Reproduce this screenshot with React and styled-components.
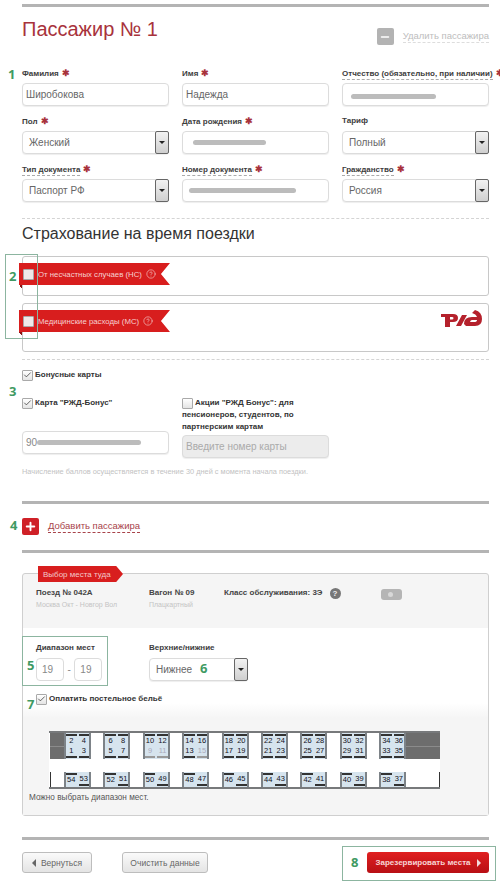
import React from 'react'
import styled, { createGlobalStyle } from 'styled-components'
import { Check, CircleHelp, Minus, Plus } from 'lucide-react'

const GlobalStyle = createGlobalStyle`
  html, body {
    margin: 0;
    padding: 0;
    background: #fff;
    font-family: "Liberation Sans", Arial, sans-serif;
    color: #333;
  }
`

const Page = styled.div`
  position: relative;
  width: 500px;
  height: 887px;
  overflow: hidden;
  padding: 4px 11px 0 22px;
  box-sizing: border-box;
`

const Rule = styled.div`
  height: 3px;
  background: #b4b4b4;
  margin-top: ${p => p.$top || 0}px;
`

const Dashed = styled.div`
  border-top: 1px dashed #d4d4d4;
  margin-top: ${p => p.$top || 0}px;
`

const TitleRow = styled.div`
  display: flex;
  justify-content: space-between;
  align-items: flex-start;
  height: 59px;
`

const Title = styled.h1`
  margin: 10px 0 0;
  font-size: 20px;
  line-height: 24px;
  font-weight: normal;
  color: #a8333c;
`

const RemoveLink = styled.div`
  display: flex;
  align-items: center;
  gap: 9px;
  margin-top: 21px;
  font-size: 9.5px;
  color: #bdbdbd;
`

const SquareIcon = styled.div`
  width: 17px;
  height: 17px;
  border-radius: 2px;
  background: ${p => p.$bg};
  color: #fff;
  display: flex;
  align-items: center;
  justify-content: center;
`

const DottedText = styled.span`
  border-bottom: 1px dashed ${p => p.$line || '#ddd'};
  padding-bottom: 1px;
`

const FormGrid = styled.div`
  display: grid;
  grid-template-columns: 147px 147px 147px;
  column-gap: 13px;
  row-gap: 8px;
`

const Field = styled.div`
  display: flex;
  flex-direction: column;
`

const Label = styled.div`
  height: 17px;
  font-size: 8px;
  line-height: 14px;
  font-weight: bold;
  color: #3d3d3d;
  white-space: nowrap;
`

const Req = styled.span`
  color: #a8333c;
  font-size: 8.5px;
  margin-left: 3px;
`

const InputBox = styled.div`
  display: flex;
  align-items: center;
  box-sizing: border-box;
  height: 23px;
  padding-left: 3px;
  border: 1px solid #dcdcdc;
  border-radius: 4px;
  background: ${p => p.$bg || '#fff'};
  font-size: 10px;
  color: ${p => p.$color || '#666'};
  box-shadow: 0 1px 1px #eee;
`

const Blur = styled.div`
  width: ${p => p.$w}px;
  height: 5px;
  margin-left: ${p => p.$left || 0}px;
  margin-top: ${p => p.$down || 0}px;
  border-radius: 3px;
  background: #bcbcbc;
`

const SelectBox = styled(InputBox)`
  justify-content: space-between;
  padding-left: 6px;
`

const SelectArrow = styled.div`
  width: 14px;
  height: 23px;
  margin: -1px -1px -1px 0;
  box-sizing: border-box;
  border: 1px solid #666;
  border-radius: 2px;
  background: linear-gradient(#f2f2f2, #cfcfcf);
  display: flex;
  align-items: center;
  justify-content: center;

  &::after {
    content: '';
    border-left: 3px solid transparent;
    border-right: 3px solid transparent;
    border-top: 3px solid #222;
  }
`

const Heading = styled.h2`
  margin: 5px 0 12px;
  font-size: 16px;
  line-height: 20px;
  font-weight: normal;
  color: #333;
`

const InsuranceCard = styled.div`
  position: relative;
  box-sizing: border-box;
  height: ${p => p.$h}px;
  margin-bottom: 7px;
  padding-top: 6px;
  border: 1px solid #c8c8c8;
  border-radius: 3px;
`

const Ribbon = styled.div`
  display: flex;
  align-items: center;
  box-sizing: border-box;
  width: 151px;
  height: 22px;
  margin-left: -4px;
  padding-left: 4px;
  gap: 4px;
  background: #d81e1e;
  clip-path: polygon(0 0, 100% 0, 94% 50%, 100% 100%, 0 100%);
  color: #f6d0d0;
  font-size: 7.8px;
  white-space: nowrap;
`

const RibbonFold = styled.div`
  width: 3px;
  height: 3px;
  margin-left: -4px;
  background: linear-gradient(to top right, transparent 50%, #8c1414 50%);
`

const RzdLogo = styled.svg`
  position: absolute;
  right: 6px;
  top: 6px;
  width: 41px;
  height: 18px;
`

const Box = styled.div`
  flex: none;
  box-sizing: border-box;
  width: 11px;
  height: 11px;
  border: 1px solid #a9a9a9;
  border-radius: 1px;
  background: ${p => p.$light ? '#f0e8e8' : 'linear-gradient(#fff, #e4e4e4)'};
  color: #333;
  display: flex;
  align-items: center;
  justify-content: center;
`

const CheckLine = styled.div`
  display: flex;
  align-items: center;
  gap: 2px;
  margin-top: ${p => p.$top || 0}px;
  font-size: 8px;
  line-height: 12px;
  font-weight: bold;
  color: #333;
`

const BonusGrid = styled.div`
  display: grid;
  grid-template-columns: 147px 147px;
  column-gap: 13px;
  margin-top: 16px;
`

const BonusColumn = styled.div`
  display: flex;
  flex-direction: column;
`

const BonusText = styled.div`
  font-size: 8px;
  line-height: 12px;
  font-weight: bold;
  color: #333;
  margin-bottom: ${p => p.$bottom || 0}px;
`

const BonusSpacer = styled.div`
  height: 22px;
`

const BlurredCard = styled.div`
  display: flex;
  align-items: center;
  color: #888;
`

const Note = styled.div`
  margin-top: 8px;
  font-size: 7.4px;
  line-height: 12px;
  color: #c2c2c2;
`

const AddRow = styled.div`
  display: flex;
  align-items: center;
  gap: 9px;
  margin-top: 13px;
  height: 18px;
  font-size: 9.5px;
  color: #a8434a;
`

const SeatPanel = styled.div`
  margin-top: 20px;
  height: 243px;
  box-sizing: border-box;
  border: 1px solid #cfcfcf;
  border-radius: 3px;
  background: #f5f5f5;
  display: flex;
  flex-direction: column;
`

const PanelRibbon = styled.div`
  display: flex;
  align-items: center;
  box-sizing: border-box;
  width: 85px;
  height: 16px;
  margin: -8px 0 0 15px;
  padding-left: 5px;
  background: #d81e1e;
  clip-path: polygon(0 0, 92% 0, 100% 50%, 92% 100%, 0 100%);
  color: #f3c9c9;
  font-size: 8px;
  white-space: nowrap;
`

const TrainInfo = styled.div`
  display: flex;
  height: 41px;
  padding: 5px 0 0 13px;
  box-sizing: content-box;
`

const InfoCol = styled.div`
  width: ${p => p.$w}px;
`

const InfoTitle = styled.div`
  display: flex;
  align-items: center;
  gap: 7px;
  font-size: 8px;
  line-height: 12px;
  font-weight: bold;
  color: #444;
  white-space: nowrap;
`

const InfoSub = styled.div`
  margin-top: 1px;
  font-size: 7px;
  line-height: 10px;
  color: #c4c4c4;
  white-space: nowrap;
`

const HelpDot = styled.span`
  width: 11px;
  height: 11px;
  border-radius: 50%;
  background: #777;
  color: #eee;
  font-size: 8px;
  line-height: 11px;
  text-align: center;
`

const PhotoBadge = styled.div`
  width: 21px;
  height: 11px;
  margin-top: 2px;
  border-radius: 3px;
  background: #b5b5b5;
  display: flex;
  align-items: center;
  padding-left: 7px;
  box-sizing: border-box;

  &::before {
    content: '';
    width: 5px;
    height: 5px;
    border-radius: 50%;
    background: #d8d8d8;
  }
`

const PanelBody = styled.div`
  flex: 1;
  background: linear-gradient(#fff 0, #fff 75px, #f5f5f5 90px);
  padding: 13px 0 0 13px;
`

const FilterRow = styled.div`
  display: flex;
`

const FilterCol = styled.div`
  width: ${p => p.$w}px;
`

const RangeInputs = styled.div`
  display: flex;
  align-items: center;
  gap: 3.5px;
  font-size: 10px;
  color: #888;
`

const SmallInput = styled(InputBox)`
  width: 28px;
  padding-left: 5px;
  color: #888;
  box-shadow: none;
`

const Train = styled.div`
  box-sizing: border-box;
  width: 391px;
  height: 58px;
  margin: 26px 0 0 13px;
  border-top: 2px solid #77797b;
  border-bottom: 2px solid #77797b;
  background: #fff;
  display: flex;
  flex-direction: column;
  justify-content: space-between;
`

const TrainRow = styled.div`
  display: flex;
  height: ${p => p.$h}px;
  padding-left: 1px;
`

const TrainEnd = styled.div`
  flex: none;
  width: ${p => p.$w}px;
  height: 100%;
  background: ${p => p.$dark ? 'linear-gradient(#6d6d6d 49%, #8b8b8b 49%, #8b8b8b 52%, #6d6d6d 52%)' : 'transparent'};
  border-left: ${p => p.$wall ? '1px solid #333' : '0'};
  border-right: ${p => p.$rightWall ? '1px solid #333' : '0'};
  box-sizing: border-box;
`

const Compartment = styled.div`
  flex: none;
  box-sizing: border-box;
  width: 27px;
  margin-right: ${p => p.$last ? 0 : 12.4}px;
  padding: 1px 0;
  border-left: 2px solid #7d8388;
  border-right: 2px solid #7d8388;
  background: #d6e4ee;
  display: grid;
  grid-template-columns: 1fr 1fr;
  column-gap: 2px;
`

const Seat = styled.div`
  box-sizing: border-box;
  height: ${p => p.$h}px;
  font-size: 7.5px;
  line-height: 10px;
  color: ${p => p.$off ? '#aab' : '#112'};
  display: flex;
  justify-content: center;
  align-items: ${p => p.$up ? 'flex-start' : 'flex-end'};
  border-top: ${p => p.$up ? `2px solid ${p.$off ? '#999' : '#333'}` : '0'};
  border-bottom: ${p => p.$up ? '0' : `2px solid ${p.$off ? '#999' : '#333'}`};
`

const TrainHint = styled.div`
  margin: 3px 0 0 -7px;
  font-size: 8.2px;
  line-height: 11px;
  color: #555;
`

const Actions = styled.div`
  display: flex;
  align-items: center;
  margin-top: 12px;
`

const GrayButton = styled.div`
  box-sizing: border-box;
  height: 21px;
  width: ${p => p.$w}px;
  margin-right: ${p => p.$right || 0}px;
  border: 1px solid #bdbdbd;
  border-radius: 3px;
  background: linear-gradient(#fafafa, #e4e4e4);
  color: #666;
  font-size: 8.5px;
  display: flex;
  align-items: center;
  justify-content: center;
  gap: 5px;
`

const RedButton = styled.div`
  box-sizing: border-box;
  height: 21px;
  width: 122px;
  margin-left: auto;
  border-radius: 3px;
  background: linear-gradient(#e02020, #b80f14);
  color: #f7d5d5;
  font-size: 8px;
  font-weight: bold;
  display: flex;
  align-items: center;
  justify-content: center;
  gap: 6px;
`

const Arrow = styled.span`
  border-top: 4px solid transparent;
  border-bottom: 4px solid transparent;
  ${p => p.$left ? `border-right: 4px solid ${p.$color};` : `border-left: 4px solid ${p.$color};`}
`

// green review notes laid over the form
const Marker = styled.span`
  position: absolute;
  left: ${p => p.$x}px;
  top: ${p => p.$y}px;
  font-family: "Open Sans", sans-serif;
  font-size: 13px;
  line-height: 14px;
  font-weight: bold;
  color: #3f9a63;
`

const Frame = styled.div`
  position: absolute;
  left: ${p => p.$x}px;
  top: ${p => p.$y}px;
  width: ${p => p.$w}px;
  height: ${p => p.$h}px;
  border: 1px solid #8cb5a0;
  box-sizing: border-box;
`

const CheckBox = ({ checked, light }) => (
  <Box $light={light}>{checked && <Check size={10} strokeWidth={2} />}</Box>
)

const compartments = [
  { top: [[2], [4], [1], [3]], bottom: [54, 53] },
  { top: [[6], [8], [5], [7]], bottom: [52, 51] },
  { top: [[10], [12], [9, true], [11, true]], bottom: [50, 49] },
  { top: [[14], [16], [13], [15, true]], bottom: [48, 47] },
  { top: [[18], [20], [17], [19]], bottom: [46, 45] },
  { top: [[22], [24], [21], [23]], bottom: [44, 43] },
  { top: [[26], [28], [25], [27]], bottom: [42, 41] },
  { top: [[30], [32], [29], [31]], bottom: [40, 39] },
  { top: [[34], [36], [33], [35]], bottom: [38, 37] },
]

const fields = [
  { label: 'Фамилия', req: true, value: 'Широбокова' },
  { label: 'Имя', req: true, value: 'Надежда' },
  { label: 'Отчество (обязательно, при наличии)', req: true, dotted: true, blur: 85, left: 5, down: 4 },
  { label: 'Пол', req: true, value: 'Женский', select: true },
  { label: 'Дата рождения', req: true, blur: 73, left: 7 },
  { label: 'Тариф', value: 'Полный', select: true },
  { label: 'Тип документа', req: true, dotted: true, value: 'Паспорт РФ', select: true },
  { label: 'Номер документа', req: true, dotted: true, blur: 107, left: 3 },
  { label: 'Гражданство', req: true, dotted: true, value: 'Россия', select: true },
]

const Logo = () => (
  <RzdLogo viewBox="0 0 41 18">
    <path
      fillRule="evenodd"
      fill="#b5212c"
      d="M0 4H12Q17 4 17 8Q17 12 12 12H9V17H4V7H0ZM9 7V9.5H11Q12.5 9.5 12.5 8Q12.5 7 11 7ZM15 16L21 5H26L20 16ZM23 14Q23 7 31 7H36Q35 4 31 3L34 0Q41 2 41 9Q41 16 34 16H25ZM29 12H33Q36 12 36 10H31Q29.5 10 29 12Z"
    />
  </RzdLogo>
)

const App = () => (
  <Page>
    <GlobalStyle />
    <Rule />
    <TitleRow>
      <Title>Пассажир № 1</Title>
      <RemoveLink>
        <SquareIcon $bg="#b3b3b3"><Minus size={12} strokeWidth={3} /></SquareIcon>
        <DottedText>Удалить пассажира</DottedText>
      </RemoveLink>
    </TitleRow>

    <FormGrid>
      {fields.map(f => (
        <Field key={f.label}>
          <Label>
            {f.dotted ? <DottedText $line="#aaa">{f.label}</DottedText> : f.label}
            {f.req && <Req>✱</Req>}
          </Label>
          {f.select ? (
            <SelectBox>
              {f.value}
              <SelectArrow />
            </SelectBox>
          ) : (
            <InputBox>
              {f.blur ? <Blur $w={f.blur} $left={f.left} $down={f.down} /> : f.value}
            </InputBox>
          )}
        </Field>
      ))}
    </FormGrid>

    <Dashed $top={16} />
    <Heading>Страхование на время поездки</Heading>

    <InsuranceCard $h={40}>
      <Ribbon>
        <CheckBox light />
        От несчастных случаев (НС)
        <CircleHelp size={10} strokeWidth={1.5} />
      </Ribbon>
      <RibbonFold />
    </InsuranceCard>
    <InsuranceCard $h={49}>
      <Ribbon>
        <CheckBox light />
        Медицинские расходы (МС)
        <CircleHelp size={10} strokeWidth={1.5} />
      </Ribbon>
      <RibbonFold />
      <Logo />
    </InsuranceCard>
    <Dashed />

    <CheckLine $top={9}>
      <CheckBox checked />
      Бонусные карты
    </CheckLine>
    <BonusGrid>
      <BonusColumn>
        <CheckLine>
          <CheckBox checked />
          Карта "РЖД-Бонус"
        </CheckLine>
        <BonusSpacer />
        <InputBox><BlurredCard>90<Blur $w={104} /></BlurredCard></InputBox>
      </BonusColumn>
      <BonusColumn>
        <CheckLine>
          <CheckBox />
          <BonusText>Акции "РЖД Бонус": для</BonusText>
        </CheckLine>
        <BonusText $bottom={2}>пенсионеров, студентов, по<br />партнерским картам</BonusText>
        <InputBox $bg="#ececec" $color="#aaa">Введите номер карты</InputBox>
      </BonusColumn>
    </BonusGrid>
    <Note>Начисление баллов осуществляется в течение 30 дней с момента начала поездки.</Note>

    <Rule $top={23} />
    <AddRow>
      <SquareIcon $bg="#cf2027"><Plus size={13} strokeWidth={3.5} /></SquareIcon>
      <DottedText $line="#a8434a">Добавить пассажира</DottedText>
    </AddRow>
    <Rule $top={15} />

    <SeatPanel>
      <PanelRibbon>Выбор места туда</PanelRibbon>
      <TrainInfo>
        <InfoCol $w={113}>
          <InfoTitle>Поезд № 042А</InfoTitle>
          <InfoSub>Москва Окт - Новгор Вол</InfoSub>
        </InfoCol>
        <InfoCol $w={75}>
          <InfoTitle>Вагон № 09</InfoTitle>
          <InfoSub>Плацкартный</InfoSub>
        </InfoCol>
        <InfoCol $w={157}>
          <InfoTitle>Класс обслуживания: 3Э <HelpDot>?</HelpDot></InfoTitle>
        </InfoCol>
        <PhotoBadge />
      </TrainInfo>
      <PanelBody>
        <FilterRow>
          <FilterCol $w={113}>
            <Label>Диапазон мест</Label>
            <RangeInputs>
              <SmallInput>19</SmallInput>
              -
              <SmallInput>19</SmallInput>
            </RangeInputs>
          </FilterCol>
          <FilterCol $w={99}>
            <Label>Верхние/нижние</Label>
            <SelectBox>
              Нижнее
              <SelectArrow />
            </SelectBox>
          </FilterCol>
        </FilterRow>
        <CheckLine $top={12}>
          <CheckBox checked />
          Оплатить постельное бельё
        </CheckLine>
        <Train>
          <TrainRow $h={26}>
            <TrainEnd $w={14} $dark />
            {compartments.map((c, i) => (
              <Compartment key={i} $last={i === compartments.length - 1}>
                {c.top.map(([n, off], j) => (
                  <Seat key={n} $h={12} $up={j < 2} $off={off}>{n}</Seat>
                ))}
              </Compartment>
            ))}
            <TrainEnd $w={34} $dark />
          </TrainRow>
          <TrainRow $h={15}>
            <TrainEnd $w={14} $wall />
            {compartments.map((c, i) => (
              <Compartment key={i} $last={i === compartments.length - 1}>
                <Seat $h={13} $up>{c.bottom[0]}</Seat>
                <Seat $h={13}>{c.bottom[1]}</Seat>
              </Compartment>
            ))}
            <TrainEnd $w={34} $rightWall />
          </TrainRow>
        </Train>
        <TrainHint>Можно выбрать диапазон мест.</TrainHint>
      </PanelBody>
    </SeatPanel>

    <Rule $top={21} />
    <Actions>
      <GrayButton $w={70} $right={30}>
        <Arrow $left $color="#666" />
        Вернуться
      </GrayButton>
      <GrayButton $w={86}>Очистить данные</GrayButton>
      <RedButton>
        Зарезервировать места
        <Arrow $color="#f2dada" />
      </RedButton>
    </Actions>

    <Frame $x={5} $y={254} $w={33} $h={85} />
    <Frame $x={22} $y={636} $w={86} $h={50} />
    <Frame $x={342} $y={846} $w={154} $h={35} />
    <Marker $x={8} $y={67}>1</Marker>
    <Marker $x={9} $y={269}>2</Marker>
    <Marker $x={9} $y={384}>3</Marker>
    <Marker $x={10} $y={518}>4</Marker>
    <Marker $x={27} $y={658}>5</Marker>
    <Marker $x={200} $y={661}>6</Marker>
    <Marker $x={27} $y={697}>7</Marker>
    <Marker $x={351} $y={855}>8</Marker>
  </Page>
)

export default App
